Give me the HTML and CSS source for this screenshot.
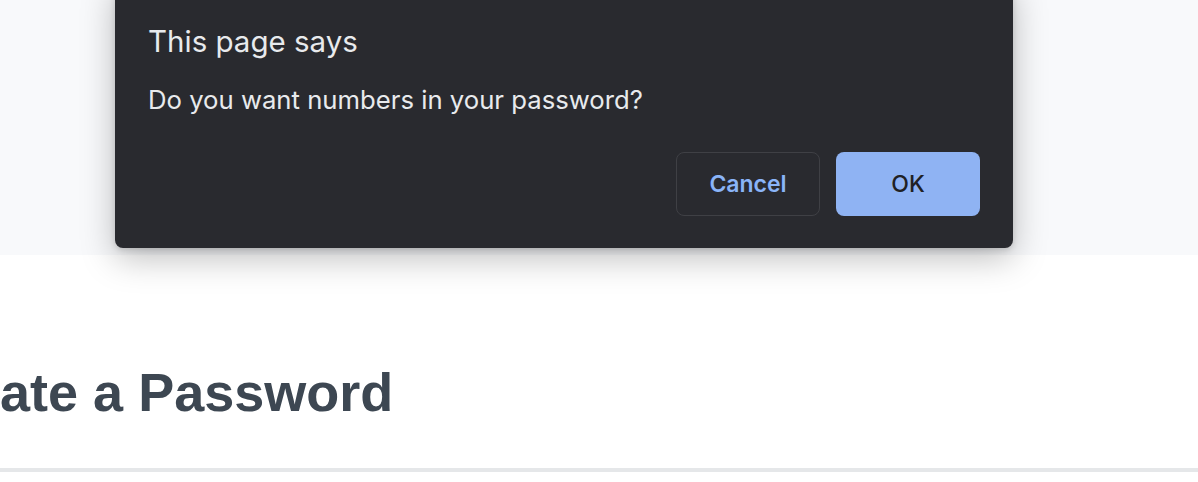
FILE: index.html
```html
<!DOCTYPE html>
<html>
<head>
<meta charset="utf-8">
<link rel="stylesheet" href="styles.css">
</head>
<body>
<header class="hero"></header>
<main class="content">
  <h1 class="page-title">Create a Password</h1>
  <hr class="rule">
</main>
<div class="dialog" role="dialog">
  <div class="dialog-title">This page says</div>
  <div class="dialog-message">Do you want numbers in your password?</div>
  <div class="dialog-actions">
    <button class="btn btn-cancel">Cancel</button>
    <button class="btn btn-ok">OK</button>
  </div>
</div>
</body>
</html>
```

FILE: styles.css
```css
html, body {
  margin: 0;
  padding: 0;
  background: #ffffff;
  overflow: hidden;
}
body {
  width: 1198px;
  height: 482px;
  position: relative;
}
.hero {
  height: 255px;
  background: #f8f9fb;
}
.content {
  padding-top: 106px;
}
.page-title {
  margin: 0 0 0 -90px;
  font-family: "Liberation Sans", Arial, sans-serif;
  font-weight: 700;
  font-size: 54px;
  line-height: 62px;
  color: #3d4752;
  white-space: nowrap;
}
.rule {
  margin: 45px 0 0 0;
  border: 0;
  height: 4px;
  background: #e5e7e9;
}
.dialog {
  position: absolute;
  left: 115px;
  top: -20px;
  width: 898px;
  height: 268px;
  box-sizing: border-box;
  background: #292a2f;
  border-radius: 8px;
  box-shadow: 0 10px 34px rgba(0,0,0,0.26), 0 2px 6px rgba(0,0,0,0.14);
  padding: 44px 33px 32px 33px;
  display: flex;
  flex-direction: column;
  font-family: Inter, "Noto Sans", sans-serif;
  color: #e8eaed;
}
.dialog-title {
  font-size: 29.5px;
  line-height: 34px;
}
.dialog-message {
  margin-top: 27px;
  font-size: 25.7px;
  line-height: 30px;
}
.dialog-actions {
  margin-top: auto;
  display: flex;
  justify-content: flex-end;
  gap: 16px;
}
.btn {
  width: 144px;
  height: 64px;
  border-radius: 8px;
  font-family: Inter, "Noto Sans", sans-serif;
  font-size: 23px;
  font-weight: 600;
  cursor: pointer;
}
.btn-cancel {
  background: transparent;
  border: 1.5px solid #3f4045;
  color: #8ab4f8;
}
.btn-ok {
  background: #8fb3f3;
  border: 0;
  color: #202124;
  font-weight: 500;
}
```
